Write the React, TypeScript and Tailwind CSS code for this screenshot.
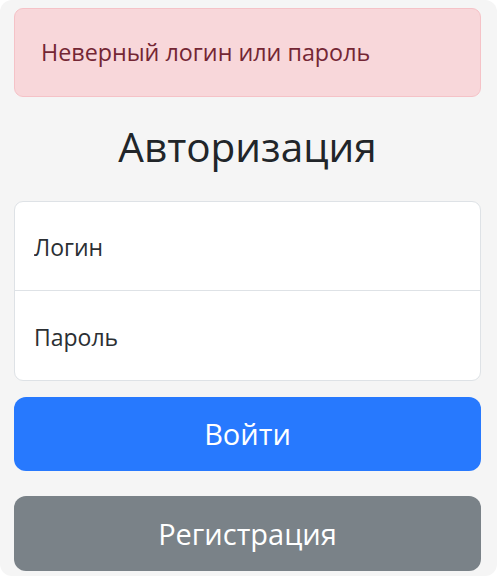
import React, { useState } from 'react';

const App: React.FC = () => {
  const [login, setLogin] = useState('');
  const [password, setPassword] = useState('');

  return (
    <div className="min-h-[576px] bg-white">
      <div
        className="h-[576px] w-[497px] rounded-[12px] bg-[#f5f5f5] pl-[14px] pr-[16px] pt-[8px]"
        style={{ fontFamily: '"Open Sans", "Noto Sans", sans-serif' }}
      >
        {/* Error alert */}
        <div className="flex h-[89px] items-center rounded-[9px] border border-[#f5c2c7] bg-[#f8d7da] px-[26px] text-[23.3px] text-[#742634]">
          Неверный логин или пароль
        </div>

        {/* Title */}
        <h3 className="mt-[24px] text-center text-[40.5px] leading-[52px] text-[#212529]">Авторизация</h3>

        {/* Login form */}
        <div className="mt-[28px] overflow-hidden rounded-[9px] border border-[#dee2e6] bg-white">
          <input
            value={login}
            onChange={(e) => setLogin(e.target.value)}
            placeholder="Логин"
            className="block h-[89px] w-full border-b border-[#dee2e6] px-[19px] pt-[2px] text-[23px] text-[#212529] outline-none placeholder:text-[#2b2f33]"
          />
          <input
            type="password"
            value={password}
            onChange={(e) => setPassword(e.target.value)}
            placeholder="Пароль"
            className="block h-[89px] w-full px-[19px] pt-[2px] text-[23px] text-[#212529] outline-none placeholder:text-[#2b2f33]"
          />
        </div>

        <button className="mt-[16px] block h-[74px] w-full rounded-[12px] bg-[#2779fe] text-[29px] text-white">
          Войти
        </button>
        <button className="mt-[25px] block h-[75px] w-full rounded-[12px] bg-[#7a8288] text-[29px] text-white">
          Регистрация
        </button>
      </div>
    </div>
  );
};

export default App;
